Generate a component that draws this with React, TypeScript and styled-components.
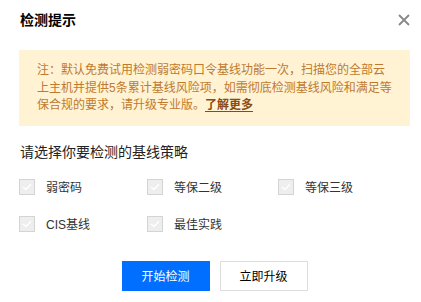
import React from "react";
import styled, { createGlobalStyle } from "styled-components";

const Global = createGlobalStyle`
  html, body { margin: 0; padding: 0; background: #fff; overflow: hidden; }
  body { font-family: "Liberation Sans", "Noto Sans CJK SC", sans-serif; color: #000; }
  * { box-sizing: border-box; }
`;

const Dialog = styled.div`
  width: 430px;
  padding: 10px 20px 0 19px;
  background: #fff;
`;

const Header = styled.div`
  display: flex;
  align-items: center;
  justify-content: space-between;
  height: 20px;
`;

const Title = styled.h3`
  margin: 0 0 0 1px;
  font-size: 14px;
  line-height: 20px;
  font-weight: 700;
  color: #000;
`;

const Close = styled.button`
  display: flex;
  align-items: center;
  justify-content: center;
  width: 14px;
  height: 14px;
  padding: 0;
  margin-right: -1px;
  border: 0;
  background: none;
  cursor: pointer;
`;

const Alert = styled.div`
  margin-top: 20px;
  background: #fff3d4;
  padding: 12px 14px 11px 18px;
  font-size: 12px;
  line-height: 17.5px;
  color: #c0792e;
`;

const Link = styled.a`
  color: #8a4a14;
  font-weight: 700;
  text-decoration: underline;
  text-underline-offset: 2px;
`;

const SectionTitle = styled.div`
  margin-top: 16px;
  margin-left: 1px;
  font-size: 14px;
  line-height: 20px;
  color: #222;
`;

const Options = styled.div`
  margin-top: 17px;
  display: grid;
  grid-template-columns: 128px 131px auto;
  row-gap: 21px;
`;

const Option = styled.label`
  display: flex;
  align-items: center;
  gap: 11px;
  height: 16px;
  font-size: 12px;
  color: #333;
`;

const Box = styled.span`
  display: flex;
  align-items: center;
  justify-content: center;
  width: 16px;
  height: 16px;
  border: 1px solid #d4d4d4;
  background: #eeeeee;
`;

const Actions = styled.div`
  margin-top: 29px;
  display: flex;
  justify-content: center;
  gap: 10px;
`;

const Button = styled.button<{ $primary?: boolean }>`
  width: 88px;
  height: 30px;
  padding: 0;
  font-family: inherit;
  font-size: 12px;
  border: 1px solid ${(p) => (p.$primary ? "#006eff" : "#dddddd")};
  background: ${(p) => (p.$primary ? "#006eff" : "#fff")};
  color: ${(p) => (p.$primary ? "#fff" : "#000")};
  cursor: pointer;
`;

const Check = () => (
  <Box>
    <svg width="10" height="8" viewBox="0 0 10 8">
      <path d="M1 4 L4 6.6 L9 1.2" fill="none" stroke="#fff" strokeWidth="1.4" />
    </svg>
  </Box>
);

const options = ["弱密码", "等保二级", "等保三级", "CIS基线", "最佳实践"];

export default function App() {
  return (
    <>
      <Global />
      <Dialog>
        <Header>
          <Title>检测提示</Title>
          <Close aria-label="关闭">
            <svg width="12" height="12" viewBox="0 0 12 12">
              <path d="M1 1 L11 11 M11 1 L1 11" stroke="#888" strokeWidth="1.8" />
            </svg>
          </Close>
        </Header>
        <Alert>
          注：默认免费试用检测弱密码口令基线功能一次，扫描您的全部云上主机并提供5条累计基线风险项，如需彻底检测基线风险和满足等保合规的要求，请升级专业版。
          <Link>了解更多</Link>
        </Alert>
        <SectionTitle>请选择你要检测的基线策略</SectionTitle>
        <Options>
          {options.map((o) => (
            <Option key={o}>
              <Check />
              {o}
            </Option>
          ))}
        </Options>
        <Actions>
          <Button $primary>开始检测</Button>
          <Button>立即升级</Button>
        </Actions>
      </Dialog>
    </>
  );
}
